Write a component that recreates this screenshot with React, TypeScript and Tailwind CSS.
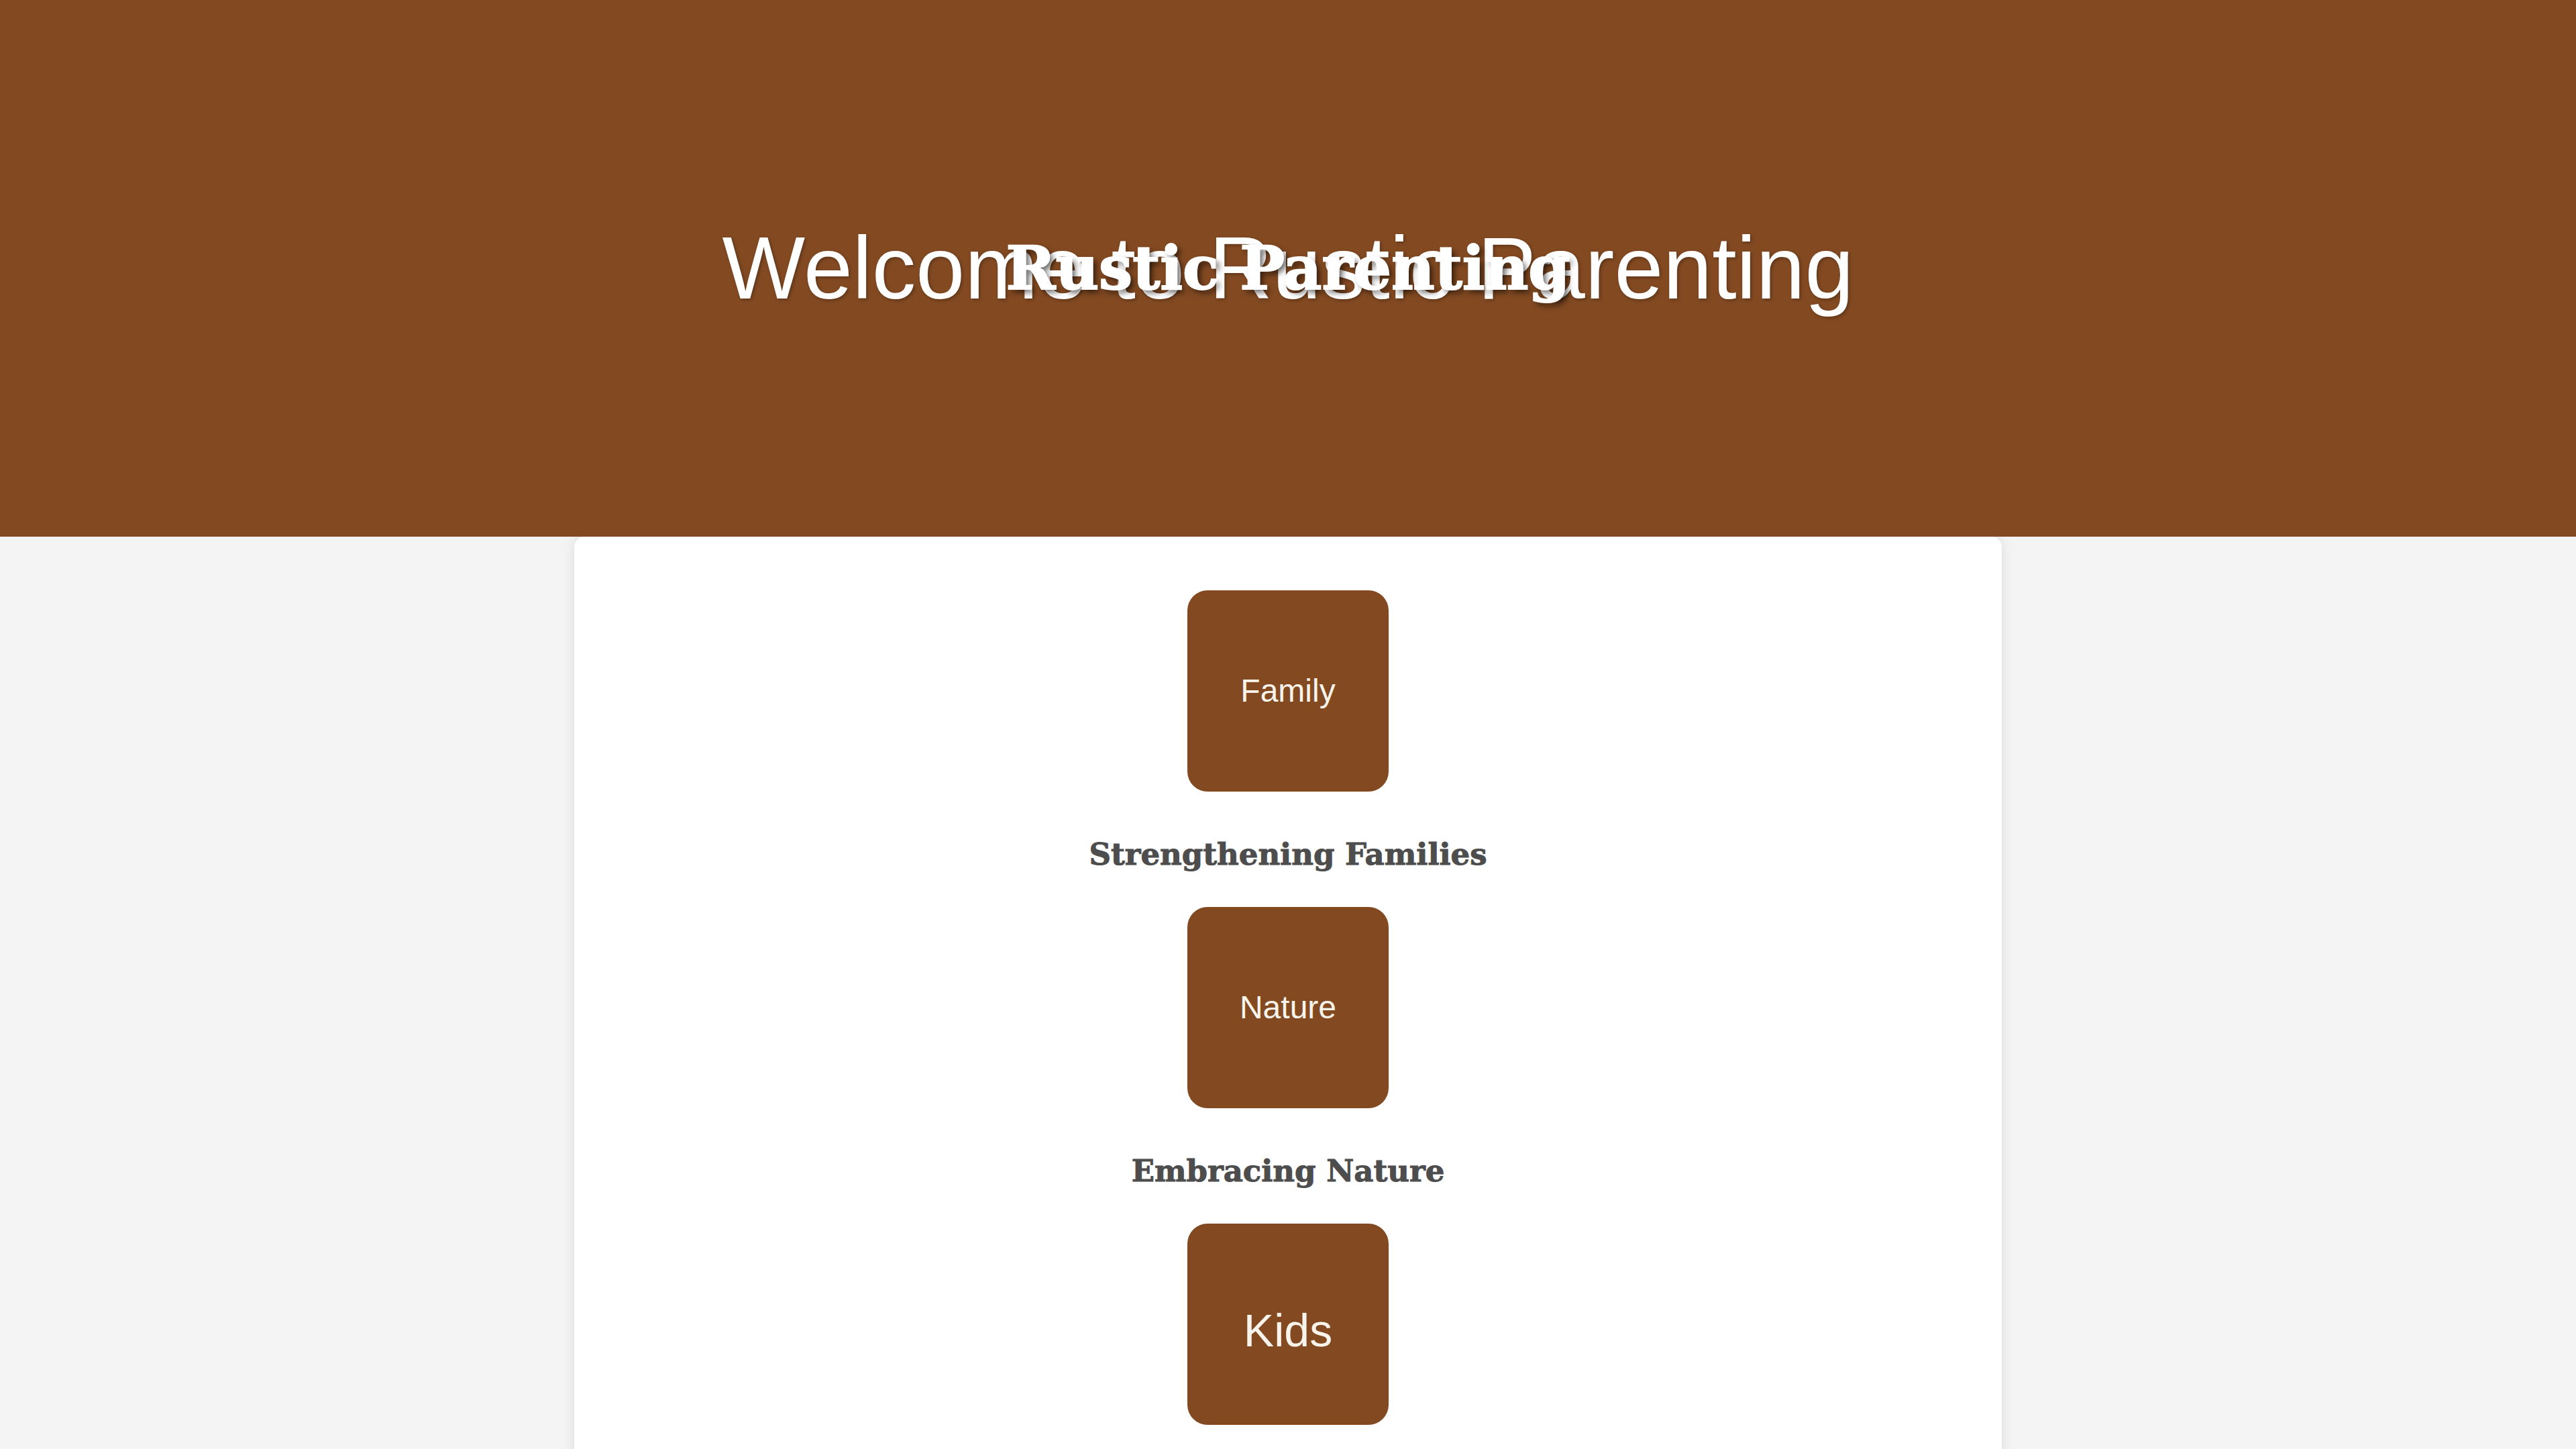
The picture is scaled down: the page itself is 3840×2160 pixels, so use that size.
import * as React from "react";

const items = [
  { label: "Family", title: "Strengthening Families", big: false },
  { label: "Nature", title: "Embracing Nature", big: false },
  { label: "Kids", title: "", big: true },
];

const App: React.FC = () => {
  return (
    <div className="min-h-screen bg-[#f4f4f4] font-['Liberation_Sans',Arial,sans-serif]">
      <header className="relative flex h-[800px] items-center justify-center bg-[#834a22]">
        <h1 className="text-[131px] leading-[1.15] text-white [text-shadow:2px_2px_5px_rgba(0,0,0,0.3)]">
          Welcome to Rustic Parenting
        </h1>
        <div className="absolute inset-0 flex items-center justify-center">
          <h2 className="font-['DejaVu_Serif',serif] text-[89px] font-bold leading-[1.164] text-white [-webkit-text-stroke:2px_white] [text-shadow:5px_5px_8px_rgba(0,0,0,0.6)]">
            Rustic Parenting
          </h2>
        </div>
      </header>

      <main className="mx-auto flex w-[2128px] flex-col items-center rounded-t-2xl bg-white pt-[80px] pb-[120px] shadow-[0_0_20px_rgba(0,0,0,0.1)]">
        {items.map((item) => (
          <section key={item.label} className="flex flex-col items-center">
            <div
              className={`flex h-[300px] w-[300px] items-center justify-center rounded-[30px] bg-[#834a22] text-[#f8f4ec] ${
                item.big ? "pt-[18px] text-[68px]" : "text-[48px]"
              }`}
            >
              {item.label}
            </div>
            {item.title ? (
              <h3 className="mt-[68px] mb-[52px] font-['DejaVu_Serif',serif] text-[45px] font-bold leading-[52px] text-[#4d4d4d] [-webkit-text-stroke:1px_#4d4d4d]">
                {item.title}
              </h3>
            ) : (
              <div className="h-[172px]" />
            )}
          </section>
        ))}
      </main>
    </div>
  );
};

export default App;
